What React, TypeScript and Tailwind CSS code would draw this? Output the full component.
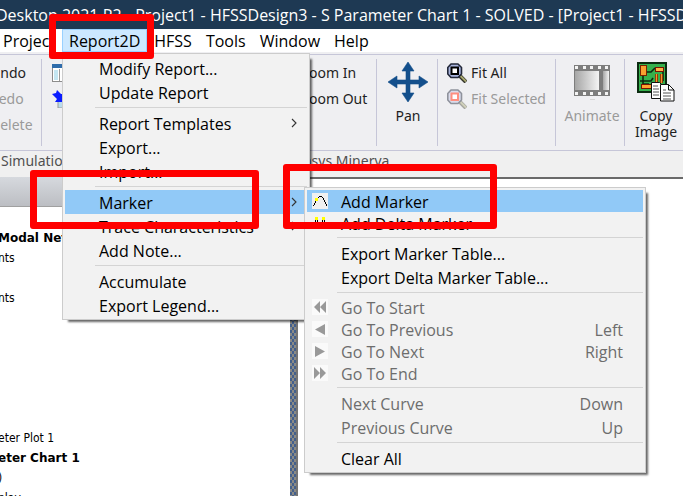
import React from "react";

type Item = {
  label: string;
  tall?: boolean;
  disabled?: boolean;
  shortcut?: string;
  icon?: React.ReactNode;
  arrow?: boolean;
  active?: boolean;
};

const tile = "block h-4 w-4 shrink-0 bg-[#fafafa]";

const AddMarkerIcon = () => (
  <svg viewBox="0 0 16 16" className="block h-4 w-4 shrink-0 bg-[#f0f0f0]" shapeRendering="crispEdges">
    <path d="M1 12h1v1H1zM2 10h1v2H2zM3 8h1v2H3zM4 6h1v2H4zM5 5h1v1H5zM6 4h1v1H6zM7 3h3v1H7zM10 4h1v1h-1zM11 5h1v2h-1zM12 7h1v2h-1zM13 9h1v2h-1zM14 11h1v2h-1z" fill="#000" />
    <path d="M3 5h3v3H3z" fill="#ffff00" />
  </svg>
);

const DeltaMarkerIcon = () => (
  <svg viewBox="0 0 16 16" className="block h-4 w-4 shrink-0" shapeRendering="crispEdges">
    <path d="M3 2h3v3H3zM10 2h3v3h-3z" fill="#ffff00" />
    <path d="M3 5h1v2H3zM5 5h1v2H5zM10 5h1v2h-1zM12 5h1v2h-1zM2 7h1v5H2zM6 7h1v4H6zM9 7h1v4H9zM13 7h1v5h-1zM7 11h2v1H7z" fill="#000" />
  </svg>
);

const StartIcon = () => (
  <svg viewBox="0 0 16 16" className={tile}>
    <path d="M8 2v12L2 8zM14 2v12L8 8z" fill="#999" />
  </svg>
);
const PrevIcon = () => (
  <svg viewBox="0 0 16 16" className={tile}>
    <path d="M13 3v11L3 8.500z" fill="#999" />
  </svg>
);
const NextIcon = () => (
  <svg viewBox="0 0 16 16" className={tile}>
    <path d="M3 3v11l10-5.500z" fill="#999" />
  </svg>
);
const EndIcon = () => (
  <svg viewBox="0 0 16 16" className={tile}>
    <path d="M2 2v12l6-6zM8 2v12l6-6z" fill="#999" />
  </svg>
);

const Chevron = () => (
  <svg viewBox="0 0 6 10" className="h-2.5 w-1.5" fill="none" stroke="#333" strokeWidth="1.1">
    <path d="M1 1l4 4-4 4" />
  </svg>
);

const PanIcon = () => (
  <svg viewBox="0 0 40 40" className="h-10 w-10" fill="#134f8c">
    <path d="M20 0l6 9h-4v9h9v-4l9 6-9 6v-4h-9v9h4l-6 9-6-9h4v-9H9v4l-9-6 9-6v4h9V9h-4z" stroke="#134f8c" strokeWidth="0.600" />
  </svg>
);

const FitIcon = ({ faded = false }: { faded?: boolean }) => (
  <svg viewBox="0 0 20 20" className="h-5 w-5" fill="none">
    <path d="M12.500 12.500l6.500 6.500" stroke={faded ? "#a5a5a0" : "#33332a"} strokeWidth="4" />
    <path d="M13.500 13l5.500 5.500" stroke={faded ? "#d0d0ba" : "#a8a870"} strokeWidth="1.800" />
    <path d="M4 1h7l3.500 3.500v6.500L11 14.500H4L0.800 11V4.500z" fill={faded ? "#d9dcec" : "#a9b4dd"} stroke={faded ? "#8f929c" : "#23283a"} strokeWidth="1.600" strokeLinejoin="round" />
    <rect x="4.500" y="4.500" width="6.500" height="6.500" fill="#fff" stroke={faded ? "#ff8f80" : "#000"} strokeWidth="2" />
  </svg>
);

const FilmIcon = () => (
  <svg viewBox="0 0 36 36" className="h-9 w-9">
    <defs>
      <linearGradient id="frame" x1="0" x2="1">
        <stop offset="0" stopColor="#a6a6a6" />
        <stop offset="1" stopColor="#f4f4f4" />
      </linearGradient>
    </defs>
    <rect y="1" width="36" height="31" fill="#7d7d7d" />
    <rect x="1" y="7" width="24" height="19" fill="url(#frame)" />
    <rect x="29" y="7" width="6" height="19" fill="url(#frame)" />
    {[1, 9, 16, 24, 31].map((x) => (
      <React.Fragment key={x}>
        <rect x={x} y="2" width="3" height="3" fill="#f4f4f4" />
        <rect x={x} y="28" width="3" height="3" fill="#f4f4f4" />
      </React.Fragment>
    ))}
    <rect x="16" y="35" width="5" height="1" fill="#d4d4d4" />
  </svg>
);

const CopyImageIcon = () => (
  <svg viewBox="0 0 38 40" className="h-10 w-[38px]">
    <rect x="1" y="1" width="28" height="29" fill="#35b04c" stroke="#0b2a10" strokeWidth="2" />
    <path d="M6 14v5h8l2-3M10 10h4l4-4M26 10v9M3 19h3v3h6" fill="none" stroke="#0b2a10" strokeWidth="1.600" />
    <rect x="3.500" y="3.500" width="6" height="10" fill="#f9a030" stroke="#7a2200" />
    <rect x="18.500" y="5.500" width="8" height="4" fill="#ffb347" stroke="#7a1200" />
    <rect x="4.500" y="22.500" width="10" height="4" fill="#ffa52e" stroke="#7a1200" />
    <path d="M19.500 12v9M24.500 12v9" stroke="#7a2200" strokeWidth="3" />
    <path d="M19.500 12v9M24.500 12v9" stroke="#f29a2a" strokeWidth="1.400" />
    <path d="M14.500 20.500h8l4 4v12h-12z" fill="#fff" stroke="#111" />
    <path d="M16 24h5M16 27h6M16 30h6M16 33h6" stroke="#555" />
    <path d="M23.500 22.500h8l5.500 5.500v11H23.500z" fill="#fff" stroke="#111" />
    <path d="M31.500 22.500V28H37" fill="none" stroke="#111" />
    <path d="M26 28h3M26 31h8M26 34h8M26 37h8" stroke="#555" />
  </svg>
);

const TableIcon = () => (
  <svg viewBox="0 0 18 18" className="h-[18px] w-[18px]">
    <rect x="0.500" y="0.500" width="17" height="17" fill="#fff" stroke="#8c8c8c" />
    <rect width="18" height="4" fill="#2f6cab" />
    <path d="M2 6h4v10H2z" fill="#c4e6f2" />
    <path d="M7.500 5v12M12.500 5v12" stroke="#9a9a9a" />
  </svg>
);

const ArrowIcon = () => (
  <svg viewBox="0 0 18 18" className="h-[18px] w-[18px]">
    <path d="M6 10h12v8H6z" fill="#b9dcec" stroke="#999" />
    <path d="M0 4l4-1 1-3 4 4h9v8H3l2-3z" fill="#0a1cff" />
  </svg>
);

const Separator = () => (
  <li role="separator" className="h-[7px] py-[3px] pl-[30px]">
    <div className="h-px bg-[#d4d4d4]" />
  </li>
);

const Row = ({ item, children }: { item: Item; children?: React.ReactNode }) => (
  <li className="relative">
    <button
      disabled={item.disabled}
      className={`flex w-full items-center text-left whitespace-nowrap ${item.tall ? "h-6" : "h-[22px]"} ${
        item.active ? "bg-[#91c9f7]" : ""
      } ${item.disabled ? "text-[#6d6d6d]" : "text-black"}`}
    >
      <span className="flex w-[34px] shrink-0 pl-[5px]">{item.icon}</span>
      <span className="grow pt-0.5">{item.label}</span>
      {item.shortcut && <span className="pt-0.5 pr-5">{item.shortcut}</span>}
      {item.arrow && (
        <span className="pr-2.5">
          <Chevron />
        </span>
      )}
    </button>
    {children}
  </li>
);

const reportMenu: (Item | null)[] = [
  { label: "Modify Report..." },
  { label: "Update Report" },
  null,
  { label: "Report Templates", arrow: true },
  { label: "Export..." },
  { label: "Import..." },
  null,
  { label: "Marker", arrow: true, active: true },
  { label: "Trace Characteristics", arrow: true },
  { label: "Add Note..." },
  null,
  { label: "Accumulate" },
  { label: "Export Legend..." },
];

const markerMenu: (Item | null)[] = [
  { label: "Add Marker", icon: <AddMarkerIcon />, active: true },
  { label: "Add Delta Marker", icon: <DeltaMarkerIcon /> },
  null,
  { label: "Export Marker Table...", tall: true },
  { label: "Export Delta Marker Table...", tall: true },
  null,
  { label: "Go To Start", icon: <StartIcon />, disabled: true },
  { label: "Go To Previous", icon: <PrevIcon />, disabled: true, shortcut: "Left" },
  { label: "Go To Next", icon: <NextIcon />, disabled: true, shortcut: "Right" },
  { label: "Go To End", icon: <EndIcon />, disabled: true },
  null,
  { label: "Next Curve", disabled: true, tall: true, shortcut: "Down" },
  { label: "Previous Curve", disabled: true, tall: true, shortcut: "Up" },
  null,
  { label: "Clear All", tall: true },
];

const panel = "absolute border border-[#cccccc] bg-[#f2f2f2] p-0.5 shadow-[4px_4px_2px_-2px_rgba(0,0,0,0.6)]";

const MarkerMenu = () => (
  <ul className={`${panel} -top-[3px] left-[239px] z-20 w-[342px]`}>
    {markerMenu.map((item, i) => (item ? <Row key={i} item={item} /> : <Separator key={i} />))}
  </ul>
);

const ReportMenu = () => (
  <ul className={`${panel} top-6 left-0 z-10 w-[248px]`}>
    {reportMenu.map((item, i) =>
      item ? (
        <Row key={i} item={{ ...item, tall: true }}>
          {item.active && <MarkerMenu />}
        </Row>
      ) : (
        <Separator key={i} />
      )
    )}
  </ul>
);

const Divider = () => <div className="my-[2px] w-px shrink-0 bg-[#c6c6d8]" />;

const small = "flex h-[26px] items-center gap-1 whitespace-nowrap";

const treeRows = [
  { text: "Modal Network", bold: true },
  { text: "nts" },
  { text: "" },
  { text: "nts" },
  { text: "" },
  { text: "" },
  { text: "" },
  { text: "" },
  { text: "" },
  { text: "" },
  { text: "eter Plot 1" },
  { text: "eter Chart 1", bold: true },
  { text: ")" },
  { text: "play" },
];

export default function App() {
  return (
    <div className="relative flex h-screen w-full flex-col overflow-hidden bg-white font-['Open_Sans','Noto_Sans',sans-serif] text-[16px] leading-5 text-black">
      <header className="flex h-[29px] shrink-0 items-center overflow-hidden bg-[#1e3953] whitespace-nowrap text-white">
        <h1 className="-ml-1">Desktop 2021 R2 - Project1 - HFSSDesign3 - S Parameter Chart 1 - SOLVED - [Project1 - HFSSDesign3]</h1>
      </header>

      <nav className="flex h-[23px] shrink-0 bg-white pr-2">
        <button className="w-[62px] shrink-0 pl-[3px] text-left">Project</button>
        <div className="relative">
          <button className="h-full border border-[#99d1ff] bg-[#cce8ff] px-1.5">Report2D</button>
          <ReportMenu />
        </div>
        {["HFSS", "Tools", "Window", "Help"].map((label) => (
          <button key={label} className="px-[7px]">
            {label}
          </button>
        ))}
      </nav>

      <section className="flex h-[99px] shrink-0 border-b border-[#c6c6d8] bg-[#efeff2] pt-0.5 font-['Noto_Sans','Open_Sans',sans-serif] text-[14px] text-[#1e1e1e]">
        <div className="flex w-full border-t border-[#c6c6d8] py-0.5">
          <div className="w-[41px] shrink-0 overflow-hidden pt-[3px]">
            <div className="-ml-2.5">
              <button className={small}>Undo</button>
              <button disabled className={`${small} text-[#9a9a9a]`}>Redo</button>
              <button disabled className={`${small} text-[#9a9a9a]`}>Delete</button>
            </div>
          </div>
          <Divider />
          <div className="w-[258px] shrink-0 pt-[3px] pl-2.5">
            <button aria-label="Report table" className={small}><TableIcon /></button>
            <button aria-label="Move" className={small}><ArrowIcon /></button>
          </div>
          <div className="w-[76px] shrink-0 pt-[3px] pl-px">
            <button className={small}>Zoom In</button>
            <button className={small}>Zoom Out</button>
          </div>
          <Divider />
          <button className="flex w-[60px] shrink-0 flex-col items-center pt-[5px] pl-0.5">
            <PanIcon />
            <span className="pt-1">Pan</span>
          </button>
          <Divider />
          <div className="w-[117px] shrink-0 pt-[3px] pl-[9px]">
            <button className={small}><FitIcon />Fit All</button>
            <button disabled className={`${small} text-[#9a9a9a]`}><FitIcon faded />Fit Selected</button>
          </div>
          <Divider />
          <button disabled className="flex w-[68px] shrink-0 flex-col items-center pt-[7px] pl-1 text-[#9a9a9a]">
            <FilmIcon />
            <span className="pt-1.5">Animate</span>
          </button>
          <Divider />
          <button className="flex w-[62px] shrink-0 flex-col items-center pt-[5px]">
            <CopyImageIcon />
            <span className="pt-1.5 leading-4">Copy<br />Image</span>
          </button>
        </div>
      </section>

      <div className="flex h-[26px] shrink-0 bg-[#f0f0f0] pb-1.5 font-['Noto_Sans','Open_Sans',sans-serif] text-[14px] text-[#505050]">
        <button className="w-[294px] shrink-0 pl-px text-left">Simulation</button>
        <button>Ansys Minerva</button>
      </div>

      <main className="flex min-h-0 grow">
        <aside className="w-[290px] shrink-0 overflow-hidden text-[12px]">
          <div className="h-[30px] border-b border-[#a0a0a0] bg-linear-to-b from-[#d6d9de] to-[#bcbec3]" />
          <ul className="-ml-0.5 pt-[21px]">
            {treeRows.map((row, i) => (
              <li
                key={i}
                className={`h-5 whitespace-nowrap ${
                  row.bold
                    ? "font-['DejaVu_Sans',sans-serif] font-bold"
                    : "font-['DejaVu_Sans_Condensed','DejaVu_Sans',sans-serif]"
                }`}
              >
                {row.text}
              </li>
            ))}
          </ul>
        </aside>
        <div className="w-2 shrink-0 border-r-2 border-[#747474] bg-[#8a8a86] bg-[conic-gradient(#44608c_25%,transparent_0_50%,#44608c_0_75%,transparent_0)] bg-size-[4px_6px]" />
        <div className="grow border-t-2 border-[#6a6a6a] bg-white" />
      </main>

      <div className="pointer-events-none absolute top-3.5 left-[49px] z-30 h-[45px] w-[105px] rounded-[3px] border-7 border-[#ff0000]" />
      <div className="pointer-events-none absolute top-[170px] left-[30px] z-30 h-[59px] w-[229px] rounded-[3px] border-7 border-[#ff0000]" />
      <div className="pointer-events-none absolute top-[164px] left-[283px] z-30 h-[65px] w-[214px] rounded-[3px] border-7 border-[#ff0000]" />
    </div>
  );
}
